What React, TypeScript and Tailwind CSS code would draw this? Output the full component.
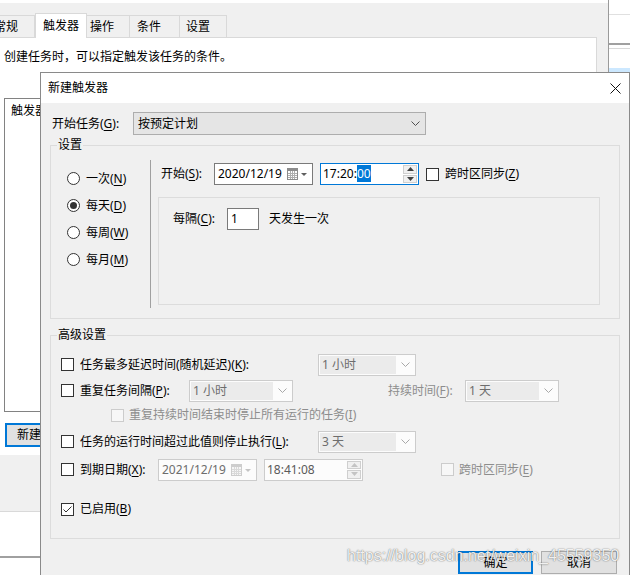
import React from "react";

function U({ k }: { k: string }) {
  return <span className="underline underline-offset-2">{k}</span>;
}

function Chevron({ color }: { color: string }) {
  return (
    <svg width="9" height="5" viewBox="0 0 9 5">
      <path d="M0.5 0.5 L4.5 4.5 L8.5 0.5" fill="none" stroke={color} strokeWidth="1" />
    </svg>
  );
}

function Check({ checked = false, disabled = false }: { checked?: boolean; disabled?: boolean }) {
  return (
    <span
      className={`flex h-[13px] w-[13px] shrink-0 items-center justify-center border ${
        disabled ? "border-[#cccccc] bg-[#f7f7f7]" : "border-[#333333] bg-white"
      }`}
    >
      {checked && (
        <svg width="11" height="11" viewBox="0 0 11 11">
          <path d="M1.5 5.5 L4 8 L9.5 2.5" fill="none" stroke="#333333" strokeWidth="1" />
        </svg>
      )}
    </span>
  );
}

function Radio({ on = false }: { on?: boolean }) {
  return (
    <span className="flex h-[13px] w-[13px] shrink-0 items-center justify-center rounded-full border border-[#333333] bg-white">
      {on && <span className="h-[7px] w-[7px] rounded-full bg-[#333333]" />}
    </span>
  );
}

function CalIcon({ dim = false }: { dim?: boolean }) {
  const c = dim ? "#cdcdcd" : "#8c8c8c";
  const t = dim ? "#c4c4c4" : "#5f5f5f";
  return (
    <svg width="21" height="12" viewBox="0 0 21 12">
      <rect x="0.5" y="0.5" width="10" height="11" fill={dim ? "#f6f6f6" : "#ffffff"} stroke={c} />
      <rect x="1" y="1" width="9" height="2" fill={c} />
      <path d="M1 5.5 H10 M1 7.5 H10 M1 9.5 H10 M3.5 3 V11 M5.5 3 V11 M7.5 3 V11" stroke={c} strokeWidth="1" opacity="0.7" />
      <path d="M14 5 L20 5 L17 8 Z" fill={t} />
    </svg>
  );
}

function Spinner({ dim = false }: { dim?: boolean }) {
  const a = dim ? "#c4c4c4" : "#404040";
  return (
    <div className="flex w-[15px] flex-col gap-[1px] self-stretch py-[1px] pr-[1px]">
      <span className="flex flex-1 items-center justify-center border border-[#cfcfcf] bg-[#f0f0f0]">
        <svg width="7" height="4" viewBox="0 0 7 4">
          <path d="M0 4 L3.5 0 L7 4 Z" fill={a} />
        </svg>
      </span>
      <span className="flex flex-1 items-center justify-center border border-[#cfcfcf] bg-[#f0f0f0]">
        <svg width="7" height="4" viewBox="0 0 7 4">
          <path d="M0 0 L7 0 L3.5 4 Z" fill={a} />
        </svg>
      </span>
    </div>
  );
}

function DCombo({ cls, text }: { cls: string; text: string }) {
  return (
    <div className={`flex h-[22px] shrink-0 items-stretch border border-[#cccccc] bg-[#fcfcfc] p-[1px] ${cls}`}>
      <span className="flex flex-1 items-center bg-[#ebebeb] pl-[2px] text-[#6d6d6d]">{text}</span>
      <span className="flex w-[18px] items-center justify-center">
        <Chevron color="#a8a8a8" />
      </span>
    </div>
  );
}

function DateBox({ text, dim = false }: { text: string; dim?: boolean }) {
  return (
    <div
      className={`flex h-[22px] w-[99px] shrink-0 items-center justify-between border pl-[3px] pr-[4px] ${
        dim ? "border-[#cccccc] bg-[#fcfcfc] text-[#6d6d6d]" : "border-[#7a7a7a] bg-white"
      }`}
    >
      <span>{text}</span>
      <CalIcon dim={dim} />
    </div>
  );
}

export default function App() {
  return (
    <div className="relative h-[575px] w-[630px] overflow-hidden bg-[#f0f0f0] font-['Noto_Sans','Noto_Sans_CJK_SC',sans-serif] text-[12px] leading-[16px] text-black">
      {/* background window */}
      <div className="flex h-full">
        <div className="flex h-full w-[609px] flex-col border-r border-[#9a9a9a]">
          <div className="h-[3px] bg-white" />
          <div className="flex w-[597px] flex-col">
            <div className="flex h-[35px] items-end border-b border-[#d9d9d9]">
              <div className="flex h-[22px] w-[35px] items-center overflow-hidden border-r border-t border-[#d9d9d9]">
                <span className="-ml-[6px] whitespace-nowrap">常规</span>
              </div>
              <div className="relative -mb-px flex h-[25px] w-[52px] items-start border-l border-r border-t border-[#d9d9d9] bg-white pl-[7px] pt-[4px]">
                触发器
              </div>
              <div className="flex h-[22px] w-[43px] items-center border-r border-t border-[#d9d9d9] pl-[3px]">操作</div>
              <div className="flex h-[22px] w-[50px] items-center border-r border-t border-[#d9d9d9] pl-[7px]">条件</div>
              <div className="flex h-[22px] w-[47px] items-center border-r border-t border-[#d9d9d9] pl-[6px]">设置</div>
            </div>
            <div className="flex h-[417px] flex-col border-r border-[#d9d9d9] bg-white pt-[11px]">
              <div className="pl-[4px]">创建任务时，可以指定触发该任务的条件。</div>
              <div className="ml-[4px] mt-[33px] h-[314px] w-[560px] border border-[#828282] pl-[6px] pt-[4px]">
                触发器
              </div>
              <div className="ml-[5px] mt-[11px] flex h-[24px] w-[75px] items-center border-2 border-[#0078d7] bg-[#e1e1e1] pl-[10px]">
                新建
              </div>
            </div>
          </div>
          <div className="h-[57px] border-b border-[#d9d9d9]" />
          <div className="h-[44px] bg-white" />
          <div className="h-[2px] bg-[#a0a0a0]" />
          <div className="flex-1 bg-white" />
        </div>
        <div className="flex flex-1 flex-col bg-white">
          <div className="h-[14px]" />
          <div className="h-px bg-[#e0e0e0]" />
          <div className="h-[28px]" />
          <div className="h-[2px] bg-[#a0a0a0]" />
          <div className="h-[3px]" />
          <div className="h-px bg-[#d9d9d9]" />
          <div className="h-[19px]" />
          <div className="h-[6px] bg-[#cce8ff]" />
        </div>
      </div>

      {/* dialog */}
      <div className="absolute left-[40px] top-[72px] flex h-[515px] w-[590px] flex-col border border-[#8a8a8a] bg-[#f0f0f0]">
        <div className="flex h-[30px] items-center justify-between bg-white pl-[7px] pr-[8px]">
          <span>新建触发器</span>
          <svg width="11" height="11" viewBox="0 0 11 11">
            <path d="M0.5 0.5 L10.5 10.5 M10.5 0.5 L0.5 10.5" stroke="#111111" strokeWidth="1" fill="none" />
          </svg>
        </div>

        <div className="flex flex-col">
          <div className="mt-[9px] flex h-[23px] items-center pl-[11px]">
            <span className="w-[81px]">
              开始任务(<U k="G" />):
            </span>
            <div className="flex h-[23px] w-[293px] items-center justify-between border border-[#adadad] bg-[#e5e5e5] pl-[4px] pr-[5px]">
              <span>按预定计划</span>
              <Chevron color="#505050" />
            </div>
          </div>

          {/* 设置 */}
          <fieldset className="ml-[9px] mt-[2px] w-[570px] border border-[#dcdcdc]">
            <legend className="ml-[6px] px-[1px] leading-[16px]">设置</legend>
            <div className="flex h-[165px]">
              <div className="flex w-[99px] flex-col pl-[16px] pt-[12px]">
                <div className="flex h-[27px] items-center gap-[6px]">
                  <Radio />
                  <span>
                    一次(<U k="N" />)
                  </span>
                </div>
                <div className="flex h-[27px] items-center gap-[6px]">
                  <Radio on />
                  <span>
                    每天(<U k="D" />)
                  </span>
                </div>
                <div className="flex h-[27px] items-center gap-[6px]">
                  <Radio />
                  <span>
                    每周(<U k="W" />)
                  </span>
                </div>
                <div className="flex h-[27px] items-center gap-[6px]">
                  <Radio />
                  <span>
                    每月(<U k="M" />)
                  </span>
                </div>
              </div>
              <div className="mt-[7px] h-[148px] w-px bg-[#a0a0a0]" />
              <div className="flex flex-1 flex-col pl-[7px] pr-[19px] pt-[10px]">
                <div className="ml-[3px] flex h-[22px] items-center">
                  <span className="w-[53px]">
                    开始(<U k="S" />):
                  </span>
                  <DateBox text="2020/12/19" />
                  <div className="ml-[7px] flex h-[22px] w-[99px] items-center justify-between border border-[#0078d7] bg-white pl-[2px]">
                    <span>
                      17:20:<span className="bg-[#0078d7] text-white">00</span>
                    </span>
                    <Spinner />
                  </div>
                  <span className="ml-[7px]">
                    <Check />
                  </span>
                  <span className="ml-[6px]">
                    跨时区同步(<U k="Z" />)
                  </span>
                </div>
                <div className="mt-[12px] h-[108px] border border-[#dcdcdc] pl-[14px] pt-[10px]">
                  <div className="flex h-[22px] items-center">
                    <span className="w-[54px]">
                      每隔(<U k="C" />):
                    </span>
                    <div className="flex h-[22px] w-[32px] items-center border border-[#7a7a7a] bg-white pl-[3px]">1</div>
                    <span className="ml-[10px]">天发生一次</span>
                  </div>
                </div>
              </div>
            </div>
          </fieldset>

          {/* 高级设置 */}
          <fieldset className="ml-[9px] mt-[8px] w-[570px] border border-[#dcdcdc]">
            <legend className="ml-[6px] px-[1px] leading-[16px]">高级设置</legend>
            <div className="flex flex-col pb-[18px] pl-[10px] pt-[10px]">
              <div className="flex h-[23px] items-center">
                <Check />
                <span className="ml-[6px] w-[238px]">
                  任务最多延迟时间(随机延迟)(<U k="K" />):
                </span>
                <DCombo cls="w-[98px]" text="1 小时" />
              </div>
              <div className="mt-[3px] flex h-[23px] items-center">
                <Check />
                <span className="ml-[6px] w-[109px]">
                  重复任务间隔(<U k="P" />):
                </span>
                <DCombo cls="w-[104px]" text="1 小时" />
                <span className="ml-[95px] w-[77px] text-[#8d8d8d]">
                  持续时间(<U k="F" />):
                </span>
                <DCombo cls="w-[94px]" text="1 天" />
              </div>
              <div className="mt-[2px] flex h-[22px] items-center pl-[50px]">
                <Check disabled />
                <span className="ml-[5px] text-[#8d8d8d]">
                  重复持续时间结束时停止所有运行的任务(<U k="I" />)
                </span>
              </div>
              <div className="mt-[4px] flex h-[23px] items-center">
                <Check />
                <span className="ml-[6px] w-[238px]">
                  任务的运行时间超过此值则停止执行(<U k="L" />):
                </span>
                <DCombo cls="w-[98px]" text="3 天" />
              </div>
              <div className="mt-[5px] flex h-[23px] items-center">
                <Check />
                <span className="ml-[6px] w-[78px]">
                  到期日期(<U k="X" />):
                </span>
                <DateBox text="2021/12/19" dim />
                <div className="ml-[7px] flex h-[22px] w-[99px] items-center justify-between border border-[#cccccc] bg-[#fcfcfc] pl-[2px] text-[#5a5a5a]">
                  <span>18:41:08</span>
                  <Spinner dim />
                </div>
                <span className="ml-[78px]">
                  <Check disabled />
                </span>
                <span className="ml-[5px] text-[#8d8d8d]">
                  跨时区同步(<U k="E" />)
                </span>
              </div>
              <div className="mt-[17px] flex h-[22px] items-center">
                <Check checked />
                <span className="ml-[6px]">
                  已启用(<U k="B" />)
                </span>
              </div>
            </div>
          </fieldset>

          <div className="mt-[12px] flex justify-end gap-[8px] pr-[12px]">
            <div className="flex h-[23px] w-[75px] items-center justify-center border-2 border-[#0078d7] bg-[#e1e1e1]">确定</div>
            <div className="flex h-[23px] w-[76px] items-center justify-center border border-[#adadad] bg-[#e1e1e1]">取消</div>
          </div>
        </div>
      </div>

      {/* watermark */}
      <div className="pointer-events-none absolute left-[347px] top-[547px] font-['Liberation_Sans',sans-serif] text-[16px] leading-[18px] text-white/90 [text-shadow:0_0_1px_rgba(0,0,0,0.55),0_0_2px_rgba(0,0,0,0.25)]">
        https://blog.csdn.net/weixin_45559350
      </div>
    </div>
  );
}
